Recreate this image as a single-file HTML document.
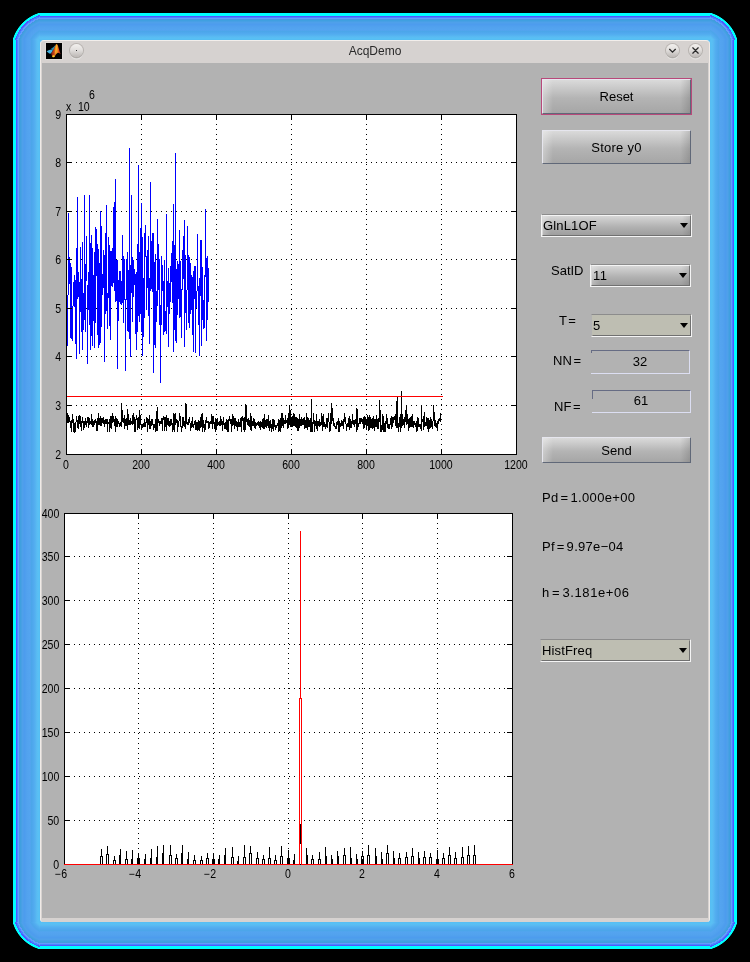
<!DOCTYPE html>
<html><head><meta charset="utf-8"><title>AcqDemo</title>
<style>
html,body{margin:0;padding:0;background:#000;}
body{width:750px;height:962px;position:relative;overflow:hidden;font-family:"Liberation Sans",sans-serif;color:#000;-webkit-font-smoothing:antialiased;}
.abs{position:absolute;}
/* glow */
.g{position:absolute;}
.gl{left:13px;top:40px;width:27px;height:882px;background:linear-gradient(to right,var(--st));}
.gr{left:710px;top:40px;width:27px;height:882px;background:linear-gradient(to left,var(--st));}
.gt{left:40px;top:13px;width:670px;height:27px;background:linear-gradient(to bottom,var(--st));}
.gb{left:40px;top:922px;width:670px;height:27px;background:linear-gradient(to top,var(--st));}
.c1{left:13px;top:13px;width:27px;height:27px;background:radial-gradient(circle at 37.8px 37.8px,var(--rs));}
.c2{left:710px;top:13px;width:27px;height:27px;background:radial-gradient(circle at -10.8px 37.8px,var(--rs));}
.c3{left:13px;top:922px;width:27px;height:27px;background:radial-gradient(circle at 37.8px -10.8px,var(--rs));}
.c4{left:710px;top:922px;width:27px;height:27px;background:radial-gradient(circle at -10.8px -10.8px,var(--rs));}
body{
--st:#00ffff 0px,#00ffff 3px,#5555ff 3px,#5555ff 4px,#4488ff 4px,#4488ff 5px,#6699ff 5px,#6699ff 6px,#4499dd 6px,#40a0e0 7.5px,#4fa0ea 9.5px,#4d9cee 11.5px,#52a2ee 14px,#54a4f0 17px,#4ca6ea 18.5px,#50a8ee 20px,#54b0f0 22px,#5abcf2 24px,#58c0f4 25.5px,#55bef2 27px;
--rs:#55bef2 15.30px,#58c0f4 16.63px,#5abcf2 17.97px,#54b0f0 19.74px,#50a8ee 21.52px,#4ca6ea 22.86px,#54a4f0 24.19px,#52a2ee 26.86px,#4d9cee 29.08px,#4fa0ea 30.86px,#40a0e0 32.63px,#4499dd 33.97px,#6699ff 34.00px,#6699ff 35.30px,#4488ff 35.30px,#4488ff 36.40px,#5555ff 36.40px,#5555ff 37.50px,#00ffff 37.50px,#00ffff 39.30px,#000 40.00px;
}
/* window */
.win{left:40px;top:40px;width:670px;height:882px;background:#d6d2d0;border-radius:4px 4px 3px 3px;box-sizing:border-box;border-top:1px solid #f2eeeb;border-left:1px solid #f0eae6;border-right:1px solid #f0eae6;}
.content{left:42px;top:63px;width:666px;height:855px;background:#b2b2b2;}
.title{left:40px;top:41px;width:670px;height:22px;line-height:20px;text-align:center;font-size:12px;color:#2a2a2a;}
.cb{width:13px;height:13px;border-radius:50%;top:44px;background:linear-gradient(to bottom,#f2f0ee,#e2dfdd 45%,#bcb8b5);box-shadow:0 0 0 1px rgba(150,144,140,.45),0 1.5px 1px rgba(90,85,80,.35),0 2.5px 1px rgba(255,255,255,.6);}
.plots{position:absolute;left:0;top:0;}
.tk{position:absolute;font-size:11px;line-height:13px;white-space:nowrap;transform:scale(.96,1.08);transform-origin:0 50%;}
.tk.c{width:40px;text-align:center;transform-origin:50% 50%;}
.tk.r{transform-origin:100% 50%;}
/* controls */
.btn{box-sizing:border-box;border:1px solid;border-color:#e6e6ee #606878 #606878 #e6e6ee;font-size:13px;text-align:center;
background:linear-gradient(to right,rgba(255,255,255,.32),rgba(255,255,255,0) 10px),linear-gradient(to left,rgba(0,0,0,.13),rgba(0,0,0,0) 10px),linear-gradient(to bottom,#dadada,#b4b4b4 55%,#a6a6a6);}
.combo{box-sizing:border-box;font-size:13px;border:1px solid;border-color:#8c8c8c #f4f4f4 #f4f4f4 #f4f4f4;}
.combo>div{position:absolute;left:0;top:0;right:0;bottom:0;box-sizing:border-box;border:1px solid;border-color:#f4f4f4 #707070 #707070 #d8d8d8;padding-left:0px;letter-spacing:.15px;
background:linear-gradient(to right,rgba(255,255,255,.25),rgba(255,255,255,0) 8px),linear-gradient(to left,rgba(0,0,0,.10),rgba(0,0,0,0) 8px),linear-gradient(to bottom,#d6d6d6,#b0b0b0 60%,#9e9e9e);}
.combo.flat{border-color:#8c8c8c #f4f4f4 #f4f4f4 #b2b2b2;}
.combo.flat>div{background:#bebeb2;border-color:#bebeb2 #707070 #707070 #bebeb2;}
.arr{position:absolute;right:2px;width:0;height:0;border-left:4.5px solid transparent;border-right:4.5px solid transparent;border-top:5px solid #000;}
.lbl{font-size:13px;line-height:15px;white-space:nowrap;word-spacing:-2px;}
.edit{box-sizing:border-box;font-size:13px;text-align:center;}
</style></head><body><div id="root" style="position:absolute;left:0;top:0;width:750px;height:962px;will-change:transform;">
<div class="g gl"></div><div class="g gr"></div><div class="g gt"></div><div class="g gb"></div>
<div class="g c1"></div><div class="g c2"></div><div class="g c3"></div><div class="g c4"></div>
<div class="abs" style="left:39px;top:39px;width:672px;height:884px;background:#57bef3"></div>
<div class="abs win"></div>
<div class="abs title">AcqDemo</div>
<svg class="abs" style="left:45px;top:42px" width="18" height="18" viewBox="-1 -1 18 18">
<defs><linearGradient id="mg" x1="5" y1="0" x2="15" y2="0" gradientUnits="userSpaceOnUse">
<stop offset="0" stop-color="#7a1c0c"/><stop offset=".3" stop-color="#c8441a"/><stop offset=".5" stop-color="#f08c1e"/><stop offset=".6" stop-color="#f6a422"/><stop offset=".75" stop-color="#e4501c"/><stop offset="1" stop-color="#8c2410"/></linearGradient>
<filter id="bl" x="-10%" y="-10%" width="120%" height="120%"><feGaussianBlur stdDeviation="0.35"/></filter></defs>
<rect x="-.5" y="-.5" width="17" height="17" fill="none" stroke="#dedad7" stroke-width="1"/>
<rect width="16" height="16" fill="#000"/>
<g filter="url(#bl)">
<path d="M0.6 8.3 L3.2 7 L5.6 6.4 L6.6 8.2 L4.9 10.4 L3.2 10.5 Z" fill="#43b4e2"/>
<path d="M5.2 5.4 L7 4.6 L8.6 3 L9.5 1.4 L9.3 3.5 L7.6 7 L6.6 8.2 L5.6 6.4 Z" fill="#2c8cae"/>
<path d="M10.45 1 C11.2 1.2 11.8 2 12.2 3.4 C12.8 5.6 13.6 8.2 14.7 11.3 C13.8 10.6 12.8 9.6 11.6 9.9 C10.4 10.2 9.8 12 8.8 13.2 C8.2 14 7.2 14.5 6.4 14 C5.9 13 5.5 11.6 5.1 10.45 C6.4 9 7.6 6.6 8.6 4.6 C9.2 3.2 9.7 1.6 10.45 1 Z" fill="url(#mg)"/>
<path d="M10.4 1.4 C10.9 2.6 11 4.5 10.7 6.5 C10.3 8.6 9.6 10 8.8 11.6 C9.3 9 9.7 6 9.8 3.5 Z" fill="#fab822"/>
<ellipse cx="7.5" cy="13.3" rx="1.3" ry="1" fill="#fcd228"/>
</g></svg>
<div class="abs cb" style="left:70px"></div><div class="abs" style="left:76px;top:50px;width:1px;height:1px;background:#333"></div>
<div class="abs cb" style="left:666px"></div>
<div class="abs cb" style="left:689px"></div>
<svg class="abs" style="left:665px;top:43px" width="40" height="16" viewBox="0 0 40 16" fill="none" stroke="#2a2a2a" stroke-width="1.25" stroke-linecap="round">
<path d="M4.6 6.3 L7.5 9.2 L10.4 6.3"/><path d="M27.8 4.8 L33.2 10.2 M33.2 4.8 L27.8 10.2"/></svg>
<div class="abs content"></div>
<svg class="plots" width="750" height="962" viewBox="0 0 750 962" shape-rendering="crispEdges"><rect x="66" y="114" width="451" height="341" fill="#fff"/><line x1="141.5" y1="114" x2="141.5" y2="454" stroke="#000" stroke-width="1" stroke-dasharray="1 4"/><line x1="216.5" y1="114" x2="216.5" y2="454" stroke="#000" stroke-width="1" stroke-dasharray="1 4"/><line x1="291.5" y1="114" x2="291.5" y2="454" stroke="#000" stroke-width="1" stroke-dasharray="1 4"/><line x1="366.5" y1="114" x2="366.5" y2="454" stroke="#000" stroke-width="1" stroke-dasharray="1 4"/><line x1="441.5" y1="114" x2="441.5" y2="454" stroke="#000" stroke-width="1" stroke-dasharray="1 4"/><line x1="66" y1="162.5" x2="516" y2="162.5" stroke="#000" stroke-width="1" stroke-dasharray="1 4"/><line x1="66" y1="211.5" x2="516" y2="211.5" stroke="#000" stroke-width="1" stroke-dasharray="1 4"/><line x1="66" y1="259.5" x2="516" y2="259.5" stroke="#000" stroke-width="1" stroke-dasharray="1 4"/><line x1="66" y1="308.5" x2="516" y2="308.5" stroke="#000" stroke-width="1" stroke-dasharray="1 4"/><line x1="66" y1="356.5" x2="516" y2="356.5" stroke="#000" stroke-width="1" stroke-dasharray="1 4"/><line x1="66" y1="405.5" x2="516" y2="405.5" stroke="#000" stroke-width="1" stroke-dasharray="1 4"/><polyline points="66.00,297.2 66.38,275.8 66.75,296.4 67.12,298.7 67.50,315.5 67.88,346.0 68.25,212.8 68.62,278.8 69.00,255.2 69.38,284.2 69.75,279.7 70.12,286.0 70.50,338.0 70.88,262.9 71.25,276.0 71.62,276.3 72.00,338.8 72.38,340.5 72.75,314.3 73.12,302.7 73.50,282.5 73.88,291.9 74.25,275.5 74.62,307.4 75.00,282.4 75.38,279.7 75.75,307.9 76.12,358.8 76.50,247.8 76.88,306.8 77.25,196.8 77.62,299.4 78.00,293.4 78.38,271.6 78.75,284.2 79.12,302.2 79.50,354.0 79.88,304.1 80.25,246.7 80.62,312.0 81.00,284.3 81.38,278.7 81.75,332.4 82.12,289.6 82.50,242.5 82.88,349.6 83.25,298.9 83.62,293.4 84.00,312.3 84.38,195.0 84.75,292.3 85.12,331.6 85.50,264.0 85.88,270.2 86.25,259.1 86.62,235.7 87.00,280.7 87.38,363.5 87.75,326.5 88.12,272.2 88.50,306.6 88.88,302.3 89.25,325.4 89.62,195.0 90.00,304.4 90.38,243.4 90.75,350.2 91.12,331.4 91.50,284.4 91.88,235.5 92.25,273.5 92.62,345.7 93.00,280.9 93.38,310.0 93.75,321.0 94.12,257.8 94.50,252.3 94.88,347.5 95.25,284.2 95.62,278.4 96.00,227.4 96.38,272.0 96.75,275.6 97.12,274.6 97.50,334.9 97.88,243.7 98.25,258.7 98.62,275.2 99.00,348.2 99.38,307.2 99.75,263.5 100.12,342.8 100.50,295.4 100.88,210.6 101.25,326.8 101.62,226.5 102.00,274.4 102.38,294.5 102.75,281.9 103.12,270.9 103.50,287.7 103.88,250.2 104.25,362.4 104.62,301.3 105.00,255.0 105.38,290.1 105.75,314.1 106.12,205.0 106.50,234.3 106.88,302.1 107.25,328.9 107.62,294.1 108.00,294.5 108.38,298.3 108.75,237.5 109.12,318.3 109.50,244.8 109.88,325.5 110.25,311.4 110.62,340.0 111.00,251.0 111.38,262.8 111.75,281.3 112.12,287.1 112.50,286.9 112.88,273.6 113.25,207.0 113.62,283.3 114.00,273.7 114.38,290.8 114.75,266.6 115.12,179.0 115.50,281.9 115.88,301.6 116.25,300.2 116.62,291.1 117.00,260.1 117.38,369.4 117.75,280.0 118.12,321.2 118.50,284.3 118.88,279.6 119.25,284.5 119.62,301.7 120.00,270.7 120.38,283.2 120.75,304.1 121.12,281.0 121.50,305.0 121.88,293.2 122.25,296.4 122.62,235.0 123.00,303.2 123.38,256.4 123.75,322.5 124.12,292.4 124.50,258.8 124.88,262.9 125.25,370.6 125.62,339.2 126.00,299.7 126.38,299.4 126.75,271.9 127.12,252.7 127.50,252.8 127.88,331.0 128.25,269.7 128.62,332.4 129.00,286.2 129.38,148.2 129.75,294.5 130.12,357.0 130.50,265.3 130.88,287.2 131.25,293.0 131.62,195.0 132.00,254.7 132.38,298.1 132.75,321.8 133.12,260.5 133.50,297.4 133.88,287.4 134.25,268.9 134.62,284.9 135.00,271.3 135.38,333.6 135.75,333.0 136.12,272.2 136.50,350.0 136.88,318.3 137.25,331.8 137.62,244.5 138.00,267.3 138.38,165.0 138.75,315.7 139.12,290.8 139.50,321.7 139.88,266.5 140.25,227.7 140.62,314.3 141.00,229.3 141.38,203.5 141.75,295.2 142.12,348.1 142.50,237.4 142.88,356.0 143.25,306.3 143.62,279.5 144.00,279.2 144.38,232.6 144.75,318.1 145.12,225.0 145.50,233.2 145.88,235.0 146.25,295.3 146.62,310.2 147.00,256.0 147.38,287.9 147.75,287.6 148.12,236.5 148.50,297.4 148.88,300.6 149.25,344.2 149.62,340.0 150.00,282.1 150.38,182.0 150.75,291.0 151.12,263.8 151.50,288.8 151.88,241.5 152.25,292.3 152.62,255.0 153.00,233.0 153.38,372.8 153.75,308.2 154.12,261.9 154.50,344.9 154.88,320.0 155.25,347.8 155.62,253.7 156.00,324.4 156.38,291.1 156.75,295.6 157.12,291.5 157.50,306.0 157.88,219.0 158.25,289.7 158.62,275.2 159.00,256.8 159.38,295.7 159.75,325.2 160.12,305.0 160.50,382.6 160.88,337.4 161.25,306.2 161.62,256.5 162.00,265.4 162.38,290.6 162.75,264.9 163.12,286.5 163.50,322.8 163.88,334.7 164.25,307.3 164.62,260.1 165.00,332.0 165.38,314.7 165.75,311.0 166.12,333.7 166.50,214.0 166.88,322.8 167.25,280.7 167.62,281.8 168.00,307.4 168.38,347.1 168.75,268.1 169.12,297.7 169.50,313.9 169.88,282.9 170.25,302.4 170.62,265.9 171.00,267.2 171.38,270.3 171.75,281.8 172.12,241.1 172.50,270.5 172.88,277.9 173.25,352.0 173.62,204.0 174.00,242.3 174.38,298.2 174.75,302.7 175.12,341.0 175.50,153.3 175.88,315.4 176.25,269.4 176.62,343.0 177.00,274.1 177.38,261.0 177.75,314.8 178.12,293.0 178.50,282.9 178.88,264.1 179.25,291.6 179.62,230.0 180.00,318.0 180.38,299.8 180.75,261.4 181.12,338.0 181.50,313.3 181.88,313.0 182.25,250.5 182.62,271.4 183.00,272.0 183.38,276.9 183.75,278.6 184.12,219.8 184.50,275.5 184.88,347.2 185.25,255.3 185.62,281.9 186.00,309.0 186.38,329.6 186.75,308.1 187.12,282.9 187.50,286.0 187.88,226.0 188.25,316.8 188.62,255.2 189.00,323.3 189.38,327.9 189.75,257.3 190.12,264.8 190.50,313.8 190.88,283.8 191.25,310.3 191.62,292.2 192.00,275.5 192.38,309.8 192.75,293.9 193.12,351.8 193.50,280.3 193.88,271.4 194.25,285.3 194.62,298.9 195.00,265.6 195.38,353.0 195.75,312.5 196.12,307.0 196.50,290.8 196.88,293.5 197.25,286.7 197.62,233.9 198.00,286.2 198.38,294.1 198.75,325.2 199.12,278.8 199.50,356.0 199.88,278.4 200.25,295.5 200.62,278.0 201.00,240.0 201.38,345.6 201.75,289.3 202.12,315.5 202.50,267.5 202.88,320.0 203.25,318.7 203.62,300.4 204.00,328.6 204.38,310.8 204.75,275.5 205.12,276.3 205.50,208.6 205.88,268.8 206.25,291.3 206.62,340.5 207.00,258.0 207.38,255.8 207.75,319.9 208.12,294.5 208.50,267.9" fill="none" stroke="#0000ff" stroke-width="1"/><polyline points="66.00,424.6 66.38,418.0 66.75,424.2 67.12,413.4 67.50,422.7 67.88,413.4 68.25,418.4 68.62,423.1 69.00,417.1 69.38,417.7 69.75,419.7 70.12,422.3 70.50,428.3 70.88,426.2 71.25,425.3 71.62,432.4 72.00,420.4 72.38,423.4 72.75,414.3 73.12,420.7 73.50,424.1 73.88,432.0 74.25,432.4 74.62,423.4 75.00,432.0 75.38,428.3 75.75,423.0 76.12,421.9 76.50,415.9 76.88,417.5 77.25,428.3 77.62,420.1 78.00,423.2 78.38,428.9 78.75,415.9 79.12,420.0 79.50,423.9 79.88,415.3 80.25,417.6 80.62,424.0 81.00,426.5 81.38,430.7 81.75,420.7 82.12,421.9 82.50,422.4 82.88,417.2 83.25,426.7 83.62,429.7 84.00,428.6 84.38,423.7 84.75,420.6 85.12,425.2 85.50,417.8 85.88,422.6 86.25,426.8 86.62,422.0 87.00,421.6 87.38,416.9 87.75,420.7 88.12,423.9 88.50,417.4 88.88,428.1 89.25,418.2 89.62,423.1 90.00,424.0 90.38,420.6 90.75,423.0 91.12,423.4 91.50,415.1 91.88,415.6 92.25,424.3 92.62,418.6 93.00,427.0 93.38,425.6 93.75,421.0 94.12,422.5 94.50,419.8 94.88,424.6 95.25,421.4 95.62,418.8 96.00,420.6 96.38,429.5 96.75,430.5 97.12,425.5 97.50,430.9 97.88,420.7 98.25,413.4 98.62,419.8 99.00,425.4 99.38,419.8 99.75,423.6 100.12,416.1 100.50,425.5 100.88,421.3 101.25,418.4 101.62,426.3 102.00,417.8 102.38,423.3 102.75,419.4 103.12,420.8 103.50,423.5 103.88,416.9 104.25,427.4 104.62,420.5 105.00,424.1 105.38,421.7 105.75,419.1 106.12,419.1 106.50,422.3 106.88,419.4 107.25,432.4 107.62,419.1 108.00,421.9 108.38,423.0 108.75,424.2 109.12,422.1 109.50,418.8 109.88,431.7 110.25,421.0 110.62,421.4 111.00,415.9 111.38,425.9 111.75,429.1 112.12,421.5 112.50,422.0 112.88,413.4 113.25,420.6 113.62,420.5 114.00,421.7 114.38,422.0 114.75,425.8 115.12,416.3 115.50,432.4 115.88,420.2 116.25,426.7 116.62,422.6 117.00,418.3 117.38,427.2 117.75,426.4 118.12,421.4 118.50,423.0 118.88,421.9 119.25,424.5 119.62,426.1 120.00,426.4 120.38,423.3 120.75,421.7 121.12,426.3 121.50,426.5 121.88,403.0 122.25,422.3 122.62,418.2 123.00,420.2 123.38,419.3 123.75,422.2 124.12,421.9 124.50,415.1 124.88,429.2 125.25,419.2 125.62,425.0 126.00,423.2 126.38,424.4 126.75,426.2 127.12,415.6 127.50,430.4 127.88,409.0 128.25,422.0 128.62,418.8 129.00,424.6 129.38,422.5 129.75,420.4 130.12,424.7 130.50,418.3 130.88,422.2 131.25,421.9 131.62,422.8 132.00,423.5 132.38,415.1 132.75,424.9 133.12,413.4 133.50,424.0 133.88,419.4 134.25,417.2 134.62,422.5 135.00,432.4 135.38,421.3 135.75,423.2 136.12,418.0 136.50,419.6 136.88,415.2 137.25,422.2 137.62,429.7 138.00,428.6 138.38,416.7 138.75,423.1 139.12,420.4 139.50,429.4 139.88,410.0 140.25,423.3 140.62,421.1 141.00,424.5 141.38,428.3 141.75,428.4 142.12,428.1 142.50,424.4 142.88,425.3 143.25,427.4 143.62,425.1 144.00,423.1 144.38,419.5 144.75,427.0 145.12,425.2 145.50,426.7 145.88,423.3 146.25,420.9 146.62,423.3 147.00,417.4 147.38,432.2 147.75,420.9 148.12,421.0 148.50,418.9 148.88,425.1 149.25,423.7 149.62,414.7 150.00,428.7 150.38,427.0 150.75,421.1 151.12,420.6 151.50,420.2 151.88,425.8 152.25,421.5 152.62,419.3 153.00,424.8 153.38,423.7 153.75,429.8 154.12,425.3 154.50,424.8 154.88,427.9 155.25,419.1 155.62,424.4 156.00,431.6 156.38,418.3 156.75,420.6 157.12,407.4 157.50,431.1 157.88,419.0 158.25,419.5 158.62,422.5 159.00,421.4 159.38,424.3 159.75,425.9 160.12,423.2 160.50,421.1 160.88,424.2 161.25,420.0 161.62,423.8 162.00,417.6 162.38,424.0 162.75,431.2 163.12,416.3 163.50,418.6 163.88,416.0 164.25,418.0 164.62,430.7 165.00,427.9 165.38,419.7 165.75,423.0 166.12,415.4 166.50,430.7 166.88,426.3 167.25,418.3 167.62,418.7 168.00,424.9 168.38,418.4 168.75,426.0 169.12,420.7 169.50,426.7 169.88,422.9 170.25,426.1 170.62,422.4 171.00,419.6 171.38,419.4 171.75,424.6 172.12,423.2 172.50,424.0 172.88,431.5 173.25,427.9 173.62,423.3 174.00,413.4 174.38,432.4 174.75,418.4 175.12,413.4 175.50,420.6 175.88,424.6 176.25,419.0 176.62,421.4 177.00,420.1 177.38,425.5 177.75,432.4 178.12,423.3 178.50,427.4 178.88,423.3 179.25,417.1 179.62,413.5 180.00,419.0 180.38,415.7 180.75,426.2 181.12,426.6 181.50,432.0 181.88,428.0 182.25,426.5 182.62,426.7 183.00,416.8 183.38,423.5 183.75,426.0 184.12,422.1 184.50,421.6 184.88,426.5 185.25,429.3 185.62,424.2 186.00,403.0 186.38,417.7 186.75,421.1 187.12,424.7 187.50,422.8 187.88,423.1 188.25,425.3 188.62,420.5 189.00,421.2 189.38,416.6 189.75,419.8 190.12,424.6 190.50,429.5 190.88,430.7 191.25,423.2 191.62,422.4 192.00,427.3 192.38,417.5 192.75,423.5 193.12,426.8 193.50,428.0 193.88,424.1 194.25,423.0 194.62,423.9 195.00,421.1 195.38,420.6 195.75,428.8 196.12,430.1 196.50,423.6 196.88,421.7 197.25,423.3 197.62,423.7 198.00,431.0 198.38,421.4 198.75,420.4 199.12,421.0 199.50,423.2 199.88,430.6 200.25,423.8 200.62,417.0 201.00,426.9 201.38,423.7 201.75,416.8 202.12,413.4 202.50,423.6 202.88,432.4 203.25,420.0 203.62,426.1 204.00,428.2 204.38,428.6 204.75,432.3 205.12,421.4 205.50,430.4 205.88,420.2 206.25,421.6 206.62,416.6 207.00,422.5 207.38,422.3 207.75,421.9 208.12,420.9 208.50,428.2 208.88,428.8 209.25,427.0 209.62,425.6 210.00,421.8 210.38,424.3 210.75,421.0 211.12,423.9 211.50,414.0 211.88,421.1 212.25,420.0 212.62,429.3 213.00,416.5 213.38,418.4 213.75,424.0 214.12,422.7 214.50,424.2 214.88,427.7 215.25,432.4 215.62,417.9 216.00,430.9 216.38,419.9 216.75,426.5 217.12,424.0 217.50,418.0 217.88,425.8 218.25,422.7 218.62,423.2 219.00,422.3 219.38,426.1 219.75,421.3 220.12,426.4 220.50,421.5 220.88,415.8 221.25,424.5 221.62,424.7 222.00,421.6 222.38,429.8 222.75,431.2 223.12,416.9 223.50,419.9 223.88,422.6 224.25,427.9 224.62,423.2 225.00,429.0 225.38,421.7 225.75,425.9 226.12,426.7 226.50,419.2 226.88,429.1 227.25,430.9 227.62,420.0 228.00,432.4 228.38,420.8 228.75,425.6 229.12,416.0 229.50,421.1 229.88,420.1 230.25,420.9 230.62,419.5 231.00,423.5 231.38,425.4 231.75,432.4 232.12,413.9 232.50,426.1 232.88,421.9 233.25,416.5 233.62,418.5 234.00,425.1 234.38,428.5 234.75,419.0 235.12,418.0 235.50,418.8 235.88,426.0 236.25,426.2 236.62,421.5 237.00,422.0 237.38,430.6 237.75,426.5 238.12,427.3 238.50,419.0 238.88,420.2 239.25,425.7 239.62,425.8 240.00,426.8 240.38,426.6 240.75,420.3 241.12,416.7 241.50,432.4 241.88,422.3 242.25,418.7 242.62,416.0 243.00,418.0 243.38,419.4 243.75,430.1 244.12,423.7 244.50,432.4 244.88,416.9 245.25,429.6 245.62,418.0 246.00,404.0 246.38,421.9 246.75,418.1 247.12,422.7 247.50,425.4 247.88,420.1 248.25,417.6 248.62,425.3 249.00,425.8 249.38,421.1 249.75,420.6 250.12,429.6 250.50,421.3 250.88,413.4 251.25,419.4 251.62,431.3 252.00,425.6 252.38,423.9 252.75,420.9 253.12,426.2 253.50,418.3 253.88,421.8 254.25,423.0 254.62,419.0 255.00,427.8 255.38,428.6 255.75,422.1 256.12,424.5 256.50,422.6 256.88,425.8 257.25,422.4 257.62,423.1 258.00,423.2 258.38,420.9 258.75,422.4 259.12,427.6 259.50,422.4 259.88,426.0 260.25,421.7 260.62,430.2 261.00,421.5 261.38,425.9 261.75,423.4 262.12,428.4 262.50,423.5 262.88,419.6 263.25,418.1 263.62,421.2 264.00,429.2 264.38,414.5 264.75,429.3 265.12,421.9 265.50,426.7 265.88,419.6 266.25,420.8 266.62,428.4 267.00,419.2 267.38,425.0 267.75,424.7 268.12,422.2 268.50,428.3 268.88,415.0 269.25,431.4 269.62,424.5 270.00,428.6 270.38,420.3 270.75,420.8 271.12,427.5 271.50,432.4 271.88,423.7 272.25,425.2 272.62,419.5 273.00,428.8 273.38,429.5 273.75,418.6 274.12,427.2 274.50,420.0 274.88,423.0 275.25,427.8 275.62,430.3 276.00,428.2 276.38,427.7 276.75,424.6 277.12,426.2 277.50,423.0 277.88,425.4 278.25,421.5 278.62,432.4 279.00,419.4 279.38,430.8 279.75,424.8 280.12,418.3 280.50,430.3 280.88,432.0 281.25,420.8 281.62,422.6 282.00,413.3 282.38,425.7 282.75,413.4 283.12,428.4 283.50,417.6 283.88,419.0 284.25,422.7 284.62,423.1 285.00,421.1 285.38,423.6 285.75,415.5 286.12,422.3 286.50,422.6 286.88,421.7 287.25,418.3 287.62,429.4 288.00,424.5 288.38,428.4 288.75,413.1 289.12,424.9 289.50,422.3 289.88,405.0 290.25,418.3 290.62,414.8 291.00,427.4 291.38,418.5 291.75,417.8 292.12,416.3 292.50,426.6 292.88,426.8 293.25,415.2 293.62,426.0 294.00,413.4 294.38,418.3 294.75,426.4 295.12,417.4 295.50,426.5 295.88,425.6 296.25,428.4 296.62,418.0 297.00,417.4 297.38,426.9 297.75,430.8 298.12,427.8 298.50,418.7 298.88,430.8 299.25,424.6 299.62,413.8 300.00,419.3 300.38,425.5 300.75,422.2 301.12,426.3 301.50,422.5 301.88,416.6 302.25,422.2 302.62,419.6 303.00,425.2 303.38,422.6 303.75,422.5 304.12,416.8 304.50,428.6 304.88,423.9 305.25,422.1 305.62,420.3 306.00,427.7 306.38,425.1 306.75,413.4 307.12,418.6 307.50,428.9 307.88,429.5 308.25,423.8 308.62,418.3 309.00,419.4 309.38,427.3 309.75,422.2 310.12,428.2 310.50,417.9 310.88,432.4 311.25,399.2 311.62,420.2 312.00,432.3 312.38,426.6 312.75,421.7 313.12,424.1 313.50,414.2 313.88,414.7 314.25,430.9 314.62,432.4 315.00,425.9 315.38,422.2 315.75,422.9 316.12,421.8 316.50,414.5 316.88,429.2 317.25,421.4 317.62,430.6 318.00,420.6 318.38,422.2 318.75,425.0 319.12,426.8 319.50,419.8 319.88,420.5 320.25,426.1 320.62,422.8 321.00,423.5 321.38,423.9 321.75,413.4 322.12,420.7 322.50,416.3 322.88,430.7 323.25,414.0 323.62,416.8 324.00,427.4 324.38,421.9 324.75,425.0 325.12,425.1 325.50,424.6 325.88,429.2 326.25,423.7 326.62,418.2 327.00,420.8 327.38,426.9 327.75,427.5 328.12,413.6 328.50,413.5 328.88,419.6 329.25,427.1 329.62,422.6 330.00,432.4 330.38,413.4 330.75,419.9 331.12,420.8 331.50,423.8 331.88,402.7 332.25,416.1 332.62,420.9 333.00,421.1 333.38,418.4 333.75,425.5 334.12,424.3 334.50,423.9 334.88,426.3 335.25,427.6 335.62,426.7 336.00,429.0 336.38,428.1 336.75,422.6 337.12,421.4 337.50,423.4 337.88,424.8 338.25,417.9 338.62,422.2 339.00,432.4 339.38,421.7 339.75,420.9 340.12,427.2 340.50,423.5 340.88,423.4 341.25,425.6 341.62,423.4 342.00,420.3 342.38,426.4 342.75,423.1 343.12,424.9 343.50,429.0 343.88,423.0 344.25,413.4 344.62,421.5 345.00,420.2 345.38,417.8 345.75,417.4 346.12,426.2 346.50,430.6 346.88,424.2 347.25,423.5 347.62,424.6 348.00,427.1 348.38,423.2 348.75,418.9 349.12,418.2 349.50,430.4 349.88,426.7 350.25,418.7 350.62,425.0 351.00,428.0 351.38,423.9 351.75,425.1 352.12,420.1 352.50,414.4 352.88,424.2 353.25,422.2 353.62,424.5 354.00,419.8 354.38,424.6 354.75,427.1 355.12,418.7 355.50,424.2 355.88,423.2 356.25,421.3 356.62,432.4 357.00,408.5 357.38,429.9 357.75,424.8 358.12,426.7 358.50,425.8 358.88,425.7 359.25,419.3 359.62,424.4 360.00,418.4 360.38,418.7 360.75,423.8 361.12,417.7 361.50,421.3 361.88,421.3 362.25,424.0 362.62,419.6 363.00,419.6 363.38,428.8 363.75,420.8 364.12,415.9 364.50,427.3 364.88,426.7 365.25,422.1 365.62,417.4 366.00,418.6 366.38,422.8 366.75,428.5 367.12,425.1 367.50,425.5 367.88,415.1 368.25,419.5 368.62,426.9 369.00,430.5 369.38,420.2 369.75,415.5 370.12,425.2 370.50,427.5 370.88,417.3 371.25,420.6 371.62,428.4 372.00,422.8 372.38,428.7 372.75,421.0 373.12,416.4 373.50,428.0 373.88,426.1 374.25,430.6 374.62,419.0 375.00,427.0 375.38,419.5 375.75,424.4 376.12,418.5 376.50,426.9 376.88,415.5 377.25,426.1 377.62,422.1 378.00,428.9 378.38,426.1 378.75,427.3 379.12,414.8 379.50,421.7 379.88,400.0 380.25,428.4 380.62,425.4 381.00,432.4 381.38,427.3 381.75,425.1 382.12,427.6 382.50,430.2 382.88,413.7 383.25,419.3 383.62,420.4 384.00,432.1 384.38,427.6 384.75,429.5 385.12,420.7 385.50,431.9 385.88,424.8 386.25,414.2 386.62,424.4 387.00,417.3 387.38,427.7 387.75,419.3 388.12,426.4 388.50,428.9 388.88,423.6 389.25,427.7 389.62,428.0 390.00,424.1 390.38,424.2 390.75,421.1 391.12,416.2 391.50,429.3 391.88,426.9 392.25,426.8 392.62,424.4 393.00,416.8 393.38,423.3 393.75,418.6 394.12,416.3 394.50,420.3 394.88,418.0 395.25,414.5 395.62,424.8 396.00,424.1 396.38,427.6 396.75,414.6 397.12,396.5 397.50,427.7 397.88,421.7 398.25,432.4 398.62,429.3 399.00,423.2 399.38,421.7 399.75,427.3 400.12,413.6 400.50,432.4 400.88,430.6 401.25,422.9 401.62,391.2 402.00,426.8 402.38,413.9 402.75,423.0 403.12,420.2 403.50,419.2 403.88,423.9 404.25,427.8 404.62,424.2 405.00,416.7 405.38,416.8 405.75,421.7 406.12,405.0 406.50,424.7 406.88,420.8 407.25,424.3 407.62,414.0 408.00,418.6 408.38,430.7 408.75,424.0 409.12,427.8 409.50,417.7 409.88,424.9 410.25,418.0 410.62,417.6 411.00,427.1 411.38,425.6 411.75,420.9 412.12,413.6 412.50,426.9 412.88,424.2 413.25,426.6 413.62,428.4 414.00,420.6 414.38,421.6 414.75,424.4 415.12,425.1 415.50,427.2 415.88,423.2 416.25,422.8 416.62,420.7 417.00,431.9 417.38,417.1 417.75,421.5 418.12,417.8 418.50,425.5 418.88,427.0 419.25,424.3 419.62,426.6 420.00,425.3 420.38,425.4 420.75,423.9 421.12,430.8 421.50,405.0 421.88,420.4 422.25,419.1 422.62,422.1 423.00,419.8 423.38,428.5 423.75,429.9 424.12,411.7 424.50,422.5 424.88,427.1 425.25,424.3 425.62,424.1 426.00,422.3 426.38,426.4 426.75,416.7 427.12,419.3 427.50,421.3 427.88,426.6 428.25,432.4 428.62,418.0 429.00,419.9 429.38,429.1 429.75,424.8 430.12,428.0 430.50,417.4 430.88,417.2 431.25,421.9 431.62,426.7 432.00,427.1 432.38,427.8 432.75,426.3 433.12,419.3 433.50,418.2 433.88,405.0 434.25,422.9 434.62,417.3 435.00,425.6 435.38,419.9 435.75,427.2 436.12,424.9 436.50,423.0 436.88,426.1 437.25,431.2 437.62,421.2 438.00,424.3 438.38,418.7 438.75,423.8 439.12,420.0 439.50,419.9 439.88,420.4 440.25,412.6 440.62,421.5 441.00,416.5" fill="none" stroke="#000" stroke-width="1"/><rect x="66" y="396" width="377" height="1" fill="#ff0000"/><rect x="141" y="115" width="1" height="5" fill="#000"/><rect x="141" y="449" width="1" height="5" fill="#000"/><rect x="216" y="115" width="1" height="5" fill="#000"/><rect x="216" y="449" width="1" height="5" fill="#000"/><rect x="291" y="115" width="1" height="5" fill="#000"/><rect x="291" y="449" width="1" height="5" fill="#000"/><rect x="366" y="115" width="1" height="5" fill="#000"/><rect x="366" y="449" width="1" height="5" fill="#000"/><rect x="441" y="115" width="1" height="5" fill="#000"/><rect x="441" y="449" width="1" height="5" fill="#000"/><rect x="67" y="162" width="5" height="1" fill="#000"/><rect x="511" y="162" width="5" height="1" fill="#000"/><rect x="67" y="211" width="5" height="1" fill="#000"/><rect x="511" y="211" width="5" height="1" fill="#000"/><rect x="67" y="259" width="5" height="1" fill="#000"/><rect x="511" y="259" width="5" height="1" fill="#000"/><rect x="67" y="308" width="5" height="1" fill="#000"/><rect x="511" y="308" width="5" height="1" fill="#000"/><rect x="67" y="356" width="5" height="1" fill="#000"/><rect x="511" y="356" width="5" height="1" fill="#000"/><rect x="67" y="405" width="5" height="1" fill="#000"/><rect x="511" y="405" width="5" height="1" fill="#000"/><rect x="66.5" y="114.5" width="450" height="340" fill="none" stroke="#000" stroke-width="1"/><rect x="64" y="513" width="449" height="352" fill="#fff"/><line x1="138.5" y1="513" x2="138.5" y2="864" stroke="#000" stroke-width="1" stroke-dasharray="1 4"/><line x1="213.5" y1="513" x2="213.5" y2="864" stroke="#000" stroke-width="1" stroke-dasharray="1 4"/><line x1="288.5" y1="513" x2="288.5" y2="864" stroke="#000" stroke-width="1" stroke-dasharray="1 4"/><line x1="362.5" y1="513" x2="362.5" y2="864" stroke="#000" stroke-width="1" stroke-dasharray="1 4"/><line x1="437.5" y1="513" x2="437.5" y2="864" stroke="#000" stroke-width="1" stroke-dasharray="1 4"/><line x1="64" y1="556.5" x2="512" y2="556.5" stroke="#000" stroke-width="1" stroke-dasharray="1 4"/><line x1="64" y1="600.5" x2="512" y2="600.5" stroke="#000" stroke-width="1" stroke-dasharray="1 4"/><line x1="64" y1="644.5" x2="512" y2="644.5" stroke="#000" stroke-width="1" stroke-dasharray="1 4"/><line x1="64" y1="688.5" x2="512" y2="688.5" stroke="#000" stroke-width="1" stroke-dasharray="1 4"/><line x1="64" y1="732.5" x2="512" y2="732.5" stroke="#000" stroke-width="1" stroke-dasharray="1 4"/><line x1="64" y1="776.5" x2="512" y2="776.5" stroke="#000" stroke-width="1" stroke-dasharray="1 4"/><line x1="64" y1="820.5" x2="512" y2="820.5" stroke="#000" stroke-width="1" stroke-dasharray="1 4"/><rect x="101" y="849" width="1" height="15" fill="#000"/><rect x="100" y="856" width="1" height="8" fill="#000"/><rect x="102" y="856" width="1" height="8" fill="#000"/><rect x="101" y="857" width="1" height="7" fill="#fff"/><rect x="107" y="846" width="1" height="18" fill="#000"/><rect x="106" y="854" width="1" height="10" fill="#000"/><rect x="108" y="854" width="1" height="10" fill="#000"/><rect x="107" y="855" width="1" height="9" fill="#fff"/><rect x="114" y="856" width="1" height="8" fill="#000"/><rect x="113" y="860" width="1" height="4" fill="#000"/><rect x="115" y="860" width="1" height="4" fill="#000"/><rect x="114" y="861" width="1" height="3" fill="#fff"/><rect x="120" y="849" width="1" height="15" fill="#000"/><rect x="119" y="855" width="2" height="9" fill="#000"/><rect x="126" y="851" width="1" height="13" fill="#000"/><rect x="125" y="859" width="1" height="5" fill="#000"/><rect x="127" y="859" width="1" height="5" fill="#000"/><rect x="126" y="860" width="1" height="4" fill="#fff"/><rect x="132" y="850" width="1" height="14" fill="#000"/><rect x="131" y="859" width="2" height="5" fill="#000"/><rect x="138" y="853" width="1" height="11" fill="#000"/><rect x="137" y="858" width="1" height="6" fill="#000"/><rect x="139" y="858" width="1" height="6" fill="#000"/><rect x="138" y="859" width="1" height="5" fill="#fff"/><rect x="145" y="854" width="1" height="10" fill="#000"/><rect x="144" y="859" width="2" height="5" fill="#000"/><rect x="151" y="849" width="1" height="15" fill="#000"/><rect x="150" y="858" width="2" height="6" fill="#000"/><rect x="157" y="846" width="1" height="18" fill="#000"/><rect x="156" y="857" width="2" height="7" fill="#000"/><rect x="163" y="845" width="1" height="19" fill="#000"/><rect x="162" y="853" width="2" height="11" fill="#000"/><rect x="170" y="845" width="1" height="19" fill="#000"/><rect x="169" y="855" width="1" height="9" fill="#000"/><rect x="171" y="855" width="1" height="9" fill="#000"/><rect x="170" y="856" width="1" height="8" fill="#fff"/><rect x="176" y="854" width="1" height="10" fill="#000"/><rect x="175" y="858" width="1" height="6" fill="#000"/><rect x="177" y="858" width="1" height="6" fill="#000"/><rect x="176" y="859" width="1" height="5" fill="#fff"/><rect x="182" y="845" width="1" height="19" fill="#000"/><rect x="181" y="853" width="2" height="11" fill="#000"/><rect x="188" y="852" width="1" height="12" fill="#000"/><rect x="187" y="859" width="2" height="5" fill="#000"/><rect x="194" y="855" width="1" height="9" fill="#000"/><rect x="193" y="860" width="1" height="4" fill="#000"/><rect x="195" y="860" width="1" height="4" fill="#000"/><rect x="194" y="861" width="1" height="3" fill="#fff"/><rect x="201" y="856" width="1" height="8" fill="#000"/><rect x="200" y="860" width="1" height="4" fill="#000"/><rect x="202" y="860" width="1" height="4" fill="#000"/><rect x="201" y="861" width="1" height="3" fill="#fff"/><rect x="207" y="853" width="1" height="11" fill="#000"/><rect x="206" y="858" width="1" height="6" fill="#000"/><rect x="208" y="858" width="1" height="6" fill="#000"/><rect x="207" y="859" width="1" height="5" fill="#fff"/><rect x="213" y="853" width="1" height="11" fill="#000"/><rect x="212" y="859" width="1" height="5" fill="#000"/><rect x="214" y="859" width="1" height="5" fill="#000"/><rect x="213" y="860" width="1" height="4" fill="#fff"/><rect x="219" y="855" width="1" height="9" fill="#000"/><rect x="218" y="859" width="2" height="5" fill="#000"/><rect x="225" y="848" width="1" height="16" fill="#000"/><rect x="224" y="855" width="2" height="9" fill="#000"/><rect x="232" y="847" width="1" height="17" fill="#000"/><rect x="231" y="857" width="1" height="7" fill="#000"/><rect x="233" y="857" width="1" height="7" fill="#000"/><rect x="232" y="858" width="1" height="6" fill="#fff"/><rect x="238" y="856" width="1" height="8" fill="#000"/><rect x="237" y="861" width="2" height="3" fill="#000"/><rect x="244" y="845" width="1" height="19" fill="#000"/><rect x="243" y="857" width="1" height="7" fill="#000"/><rect x="245" y="857" width="1" height="7" fill="#000"/><rect x="244" y="858" width="1" height="6" fill="#fff"/><rect x="250" y="846" width="1" height="18" fill="#000"/><rect x="249" y="853" width="1" height="11" fill="#000"/><rect x="251" y="853" width="1" height="11" fill="#000"/><rect x="250" y="854" width="1" height="10" fill="#fff"/><rect x="257" y="852" width="1" height="12" fill="#000"/><rect x="256" y="858" width="1" height="6" fill="#000"/><rect x="258" y="858" width="1" height="6" fill="#000"/><rect x="257" y="859" width="1" height="5" fill="#fff"/><rect x="263" y="855" width="1" height="9" fill="#000"/><rect x="262" y="859" width="1" height="5" fill="#000"/><rect x="264" y="859" width="1" height="5" fill="#000"/><rect x="263" y="860" width="1" height="4" fill="#fff"/><rect x="269" y="847" width="1" height="17" fill="#000"/><rect x="268" y="858" width="1" height="6" fill="#000"/><rect x="270" y="858" width="1" height="6" fill="#000"/><rect x="269" y="859" width="1" height="5" fill="#fff"/><rect x="275" y="855" width="1" height="9" fill="#000"/><rect x="274" y="860" width="1" height="4" fill="#000"/><rect x="276" y="860" width="1" height="4" fill="#000"/><rect x="275" y="861" width="1" height="3" fill="#fff"/><rect x="281" y="846" width="1" height="18" fill="#000"/><rect x="280" y="856" width="1" height="8" fill="#000"/><rect x="282" y="856" width="1" height="8" fill="#000"/><rect x="281" y="857" width="1" height="7" fill="#fff"/><rect x="288" y="850" width="1" height="14" fill="#000"/><rect x="287" y="858" width="1" height="6" fill="#000"/><rect x="289" y="858" width="1" height="6" fill="#000"/><rect x="288" y="859" width="1" height="5" fill="#fff"/><rect x="294" y="854" width="1" height="10" fill="#000"/><rect x="293" y="860" width="2" height="4" fill="#000"/><rect x="306" y="848" width="1" height="16" fill="#000"/><rect x="306" y="855" width="2" height="9" fill="#000"/><rect x="312" y="855" width="1" height="9" fill="#000"/><rect x="311" y="859" width="1" height="5" fill="#000"/><rect x="313" y="859" width="1" height="5" fill="#000"/><rect x="312" y="860" width="1" height="4" fill="#fff"/><rect x="319" y="852" width="1" height="12" fill="#000"/><rect x="318" y="859" width="1" height="5" fill="#000"/><rect x="320" y="859" width="1" height="5" fill="#000"/><rect x="319" y="860" width="1" height="4" fill="#fff"/><rect x="325" y="847" width="1" height="17" fill="#000"/><rect x="325" y="856" width="2" height="8" fill="#000"/><rect x="331" y="855" width="1" height="9" fill="#000"/><rect x="331" y="859" width="2" height="5" fill="#000"/><rect x="337" y="851" width="1" height="13" fill="#000"/><rect x="337" y="856" width="2" height="8" fill="#000"/><rect x="344" y="848" width="1" height="16" fill="#000"/><rect x="343" y="855" width="1" height="9" fill="#000"/><rect x="345" y="855" width="1" height="9" fill="#000"/><rect x="344" y="856" width="1" height="8" fill="#fff"/><rect x="350" y="847" width="1" height="17" fill="#000"/><rect x="350" y="858" width="2" height="6" fill="#000"/><rect x="356" y="854" width="1" height="10" fill="#000"/><rect x="356" y="859" width="2" height="5" fill="#000"/><rect x="362" y="851" width="1" height="13" fill="#000"/><rect x="361" y="856" width="1" height="8" fill="#000"/><rect x="363" y="856" width="1" height="8" fill="#000"/><rect x="362" y="857" width="1" height="7" fill="#fff"/><rect x="368" y="845" width="1" height="19" fill="#000"/><rect x="367" y="855" width="1" height="9" fill="#000"/><rect x="369" y="855" width="1" height="9" fill="#000"/><rect x="368" y="856" width="1" height="8" fill="#fff"/><rect x="375" y="848" width="1" height="16" fill="#000"/><rect x="375" y="856" width="2" height="8" fill="#000"/><rect x="381" y="852" width="1" height="12" fill="#000"/><rect x="381" y="859" width="2" height="5" fill="#000"/><rect x="387" y="845" width="1" height="19" fill="#000"/><rect x="386" y="853" width="1" height="11" fill="#000"/><rect x="388" y="853" width="1" height="11" fill="#000"/><rect x="387" y="854" width="1" height="10" fill="#fff"/><rect x="393" y="851" width="1" height="13" fill="#000"/><rect x="393" y="858" width="2" height="6" fill="#000"/><rect x="399" y="853" width="1" height="11" fill="#000"/><rect x="398" y="858" width="1" height="6" fill="#000"/><rect x="400" y="858" width="1" height="6" fill="#000"/><rect x="399" y="859" width="1" height="5" fill="#fff"/><rect x="406" y="852" width="1" height="12" fill="#000"/><rect x="405" y="857" width="1" height="7" fill="#000"/><rect x="407" y="857" width="1" height="7" fill="#000"/><rect x="406" y="858" width="1" height="6" fill="#fff"/><rect x="412" y="848" width="1" height="16" fill="#000"/><rect x="411" y="856" width="1" height="8" fill="#000"/><rect x="413" y="856" width="1" height="8" fill="#000"/><rect x="412" y="857" width="1" height="7" fill="#fff"/><rect x="418" y="852" width="1" height="12" fill="#000"/><rect x="418" y="858" width="2" height="6" fill="#000"/><rect x="424" y="851" width="1" height="13" fill="#000"/><rect x="423" y="857" width="1" height="7" fill="#000"/><rect x="425" y="857" width="1" height="7" fill="#000"/><rect x="424" y="858" width="1" height="6" fill="#fff"/><rect x="430" y="853" width="1" height="11" fill="#000"/><rect x="429" y="857" width="1" height="7" fill="#000"/><rect x="431" y="857" width="1" height="7" fill="#000"/><rect x="430" y="858" width="1" height="6" fill="#fff"/><rect x="437" y="850" width="1" height="14" fill="#000"/><rect x="436" y="859" width="1" height="5" fill="#000"/><rect x="438" y="859" width="1" height="5" fill="#000"/><rect x="437" y="860" width="1" height="4" fill="#fff"/><rect x="443" y="853" width="1" height="11" fill="#000"/><rect x="442" y="858" width="1" height="6" fill="#000"/><rect x="444" y="858" width="1" height="6" fill="#000"/><rect x="443" y="859" width="1" height="5" fill="#fff"/><rect x="449" y="847" width="1" height="17" fill="#000"/><rect x="448" y="855" width="1" height="9" fill="#000"/><rect x="450" y="855" width="1" height="9" fill="#000"/><rect x="449" y="856" width="1" height="8" fill="#fff"/><rect x="455" y="852" width="1" height="12" fill="#000"/><rect x="454" y="858" width="1" height="6" fill="#000"/><rect x="456" y="858" width="1" height="6" fill="#000"/><rect x="455" y="859" width="1" height="5" fill="#fff"/><rect x="462" y="847" width="1" height="17" fill="#000"/><rect x="461" y="857" width="1" height="7" fill="#000"/><rect x="463" y="857" width="1" height="7" fill="#000"/><rect x="462" y="858" width="1" height="6" fill="#fff"/><rect x="468" y="846" width="1" height="18" fill="#000"/><rect x="467" y="855" width="1" height="9" fill="#000"/><rect x="469" y="855" width="1" height="9" fill="#000"/><rect x="468" y="856" width="1" height="8" fill="#fff"/><rect x="474" y="845" width="1" height="19" fill="#000"/><rect x="473" y="855" width="1" height="9" fill="#000"/><rect x="475" y="855" width="1" height="9" fill="#000"/><rect x="474" y="856" width="1" height="8" fill="#fff"/><rect x="300" y="531" width="1" height="168" fill="#f00"/><rect x="299" y="698" width="1" height="166" fill="#f00"/><rect x="301" y="698" width="1" height="166" fill="#f00"/><rect x="299" y="698" width="3" height="1" fill="#f00"/><rect x="300" y="824" width="1" height="20" fill="#000"/><rect x="138" y="514" width="1" height="5" fill="#000"/><rect x="138" y="859" width="1" height="5" fill="#000"/><rect x="213" y="514" width="1" height="5" fill="#000"/><rect x="213" y="859" width="1" height="5" fill="#000"/><rect x="288" y="514" width="1" height="5" fill="#000"/><rect x="288" y="859" width="1" height="5" fill="#000"/><rect x="362" y="514" width="1" height="5" fill="#000"/><rect x="362" y="859" width="1" height="5" fill="#000"/><rect x="437" y="514" width="1" height="5" fill="#000"/><rect x="437" y="859" width="1" height="5" fill="#000"/><rect x="65" y="556" width="5" height="1" fill="#000"/><rect x="507" y="556" width="5" height="1" fill="#000"/><rect x="65" y="600" width="5" height="1" fill="#000"/><rect x="507" y="600" width="5" height="1" fill="#000"/><rect x="65" y="644" width="5" height="1" fill="#000"/><rect x="507" y="644" width="5" height="1" fill="#000"/><rect x="65" y="688" width="5" height="1" fill="#000"/><rect x="507" y="688" width="5" height="1" fill="#000"/><rect x="65" y="732" width="5" height="1" fill="#000"/><rect x="507" y="732" width="5" height="1" fill="#000"/><rect x="65" y="776" width="5" height="1" fill="#000"/><rect x="507" y="776" width="5" height="1" fill="#000"/><rect x="65" y="820" width="5" height="1" fill="#000"/><rect x="507" y="820" width="5" height="1" fill="#000"/><rect x="64.5" y="513.5" width="448" height="351" fill="none" stroke="#000" stroke-width="1"/><rect x="64" y="864" width="449" height="1" fill="#ff0000"/><rect x="300" y="864" width="1" height="1" fill="#000"/></svg>
<div class="tk r" style="right:689px;top:109px">9</div><div class="tk r" style="right:689px;top:157px">8</div><div class="tk r" style="right:689px;top:206px">7</div><div class="tk r" style="right:689px;top:254px">6</div><div class="tk r" style="right:689px;top:303px">5</div><div class="tk r" style="right:689px;top:351px">4</div><div class="tk r" style="right:689px;top:400px">3</div><div class="tk r" style="right:689px;top:449px">2</div><div class="tk c" style="left:46px;top:459px">0</div><div class="tk c" style="left:121px;top:459px">200</div><div class="tk c" style="left:196px;top:459px">400</div><div class="tk c" style="left:271px;top:459px">600</div><div class="tk c" style="left:346px;top:459px">800</div><div class="tk c" style="left:421px;top:459px">1000</div><div class="tk c" style="left:496px;top:459px">1200</div><div class="tk r" style="right:691px;top:508px">400</div><div class="tk r" style="right:691px;top:551px">350</div><div class="tk r" style="right:691px;top:595px">300</div><div class="tk r" style="right:691px;top:639px">250</div><div class="tk r" style="right:691px;top:683px">200</div><div class="tk r" style="right:691px;top:727px">150</div><div class="tk r" style="right:691px;top:771px">100</div><div class="tk r" style="right:691px;top:815px">50</div><div class="tk r" style="right:691px;top:859px">0</div><div class="tk c" style="left:40.5px;top:868.4px">−6</div><div class="tk c" style="left:114.5px;top:868.4px">−4</div><div class="tk c" style="left:189.5px;top:868.4px">−2</div><div class="tk c" style="left:268px;top:868.4px">0</div><div class="tk c" style="left:342px;top:868.4px">2</div><div class="tk c" style="left:417px;top:868.4px">4</div><div class="tk c" style="left:492px;top:868.4px">6</div><div class="tk" style="left:65.5px;top:100.6px">x</div><div class="tk" style="left:77.6px;top:100.6px">10</div><div class="tk" style="left:89.3px;top:89.4px">6</div>
<!-- controls -->
<div class="abs" style="left:541px;top:78px;width:151px;height:37px;background:#b8497a"></div>
<div class="abs btn" style="left:542px;top:79px;width:149px;height:35px;line-height:33px;">Reset</div>
<div class="abs btn" style="left:542px;top:130px;width:149px;height:34px;line-height:33.6px;letter-spacing:.25px;">Store y0</div>
<div class="abs combo" style="left:541px;top:214px;width:151px;height:23px;line-height:19px;"><div>GlnL1OF<span class="arr" style="top:7px"></span></div></div>
<div class="abs lbl" style="left:551px;top:263px">SatID</div>
<div class="abs combo" style="left:590px;top:264px;width:101px;height:23px;line-height:19px;"><div style="padding-left:1px;letter-spacing:.6px">11<span class="arr" style="top:7px"></span></div></div>
<div class="abs lbl" style="left:559px;top:313px">T =</div>
<div class="abs combo flat" style="left:591px;top:314px;width:101px;height:23px;line-height:19px;"><div>5<span class="arr" style="top:7px"></span></div></div>
<div class="abs lbl" style="left:553px;top:353px">NN =</div>
<div class="abs edit" style="left:591px;top:350px;width:99px;height:24px;line-height:22px;border-top:1px solid #666c84;border-bottom:1px solid #dcdef2;border-right:1px solid #dcdef2;">32</div>
<div class="abs" style="left:591px;top:350px;width:1px;height:3px;background:#666c84"></div>
<div class="abs lbl" style="left:554px;top:399px">NF =</div>
<div class="abs edit" style="left:592px;top:390px;width:99px;height:23px;line-height:19px;border-top:1px solid #666c84;border-bottom:1px solid #dcdef2;border-right:1px solid #dcdef2;">61</div>
<div class="abs" style="left:592px;top:390px;width:1px;height:9px;background:#666c84"></div>
<div class="abs btn" style="left:542px;top:437px;width:149px;height:26px;line-height:25px;">Send</div>
<div class="abs lbl" style="left:542px;top:490px;letter-spacing:.35px">Pd = 1.000e+00</div>
<div class="abs lbl" style="left:542px;top:539px;letter-spacing:.3px">Pf = 9.97e&#8722;04</div>
<div class="abs lbl" style="left:542px;top:585px;letter-spacing:.6px">h = 3.181e+06</div>
<div class="abs combo flat" style="left:540px;top:639px;width:151px;height:23px;line-height:19px;"><div>HistFreq<span class="arr" style="top:7px"></span></div></div>
</div></body></html>
